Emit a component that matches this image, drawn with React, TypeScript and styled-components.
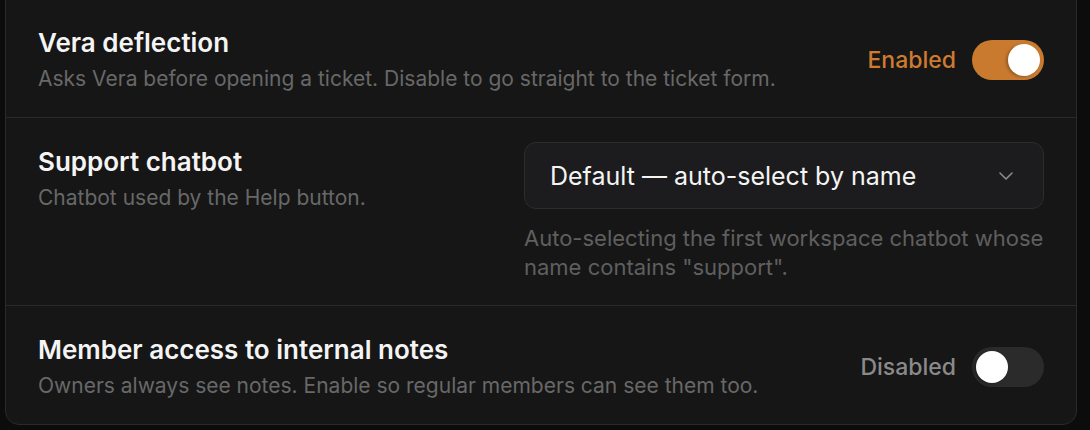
import React, { useState } from 'react';
import styled, { createGlobalStyle } from 'styled-components';

const GlobalStyle = createGlobalStyle`
  html, body {
    margin: 0;
    padding: 0;
    background: #0c0c0c;
    font-family: Inter, "Noto Sans", sans-serif;
    -webkit-font-smoothing: antialiased;
  }
`;

const Card = styled.section`
  margin: -2px 13px 0 5px;
  background: #161616;
  border: 1px solid #2a2a2a;
  border-radius: 0 0 14px 14px;
  overflow: hidden;
`;

const Row = styled.div<{ $top?: boolean }>`
  display: flex;
  justify-content: space-between;
  align-items: ${(p) => (p.$top ? 'flex-start' : 'center')};
  gap: 40px;
  padding: 26px 32px 23px 32px;
  & + & {
    border-top: 1px solid #2a2a2a;
  }
`;

const Info = styled.div`
  display: flex;
  flex-direction: column;
  gap: 3px;
`;

const Title = styled.h3`
  margin: 0;
  font-size: 26px;
  line-height: 36px;
  font-weight: 600;
  color: #f4f4f4;
`;

const Description = styled.p`
  margin: 0;
  font-size: 21px;
  line-height: 30px;
  color: #686868;
`;

const Control = styled.div`
  display: flex;
  align-items: center;
  gap: 16px;
`;

const Status = styled.span<{ $on: boolean }>`
  font-size: 23px;
  font-weight: 500;
  color: ${(p) => (p.$on ? '#cf7b2f' : '#8a8a8a')};
`;

const Track = styled.button<{ $on: boolean }>`
  position: relative;
  width: 72px;
  height: 40px;
  border: none;
  padding: 0;
  border-radius: 20px;
  cursor: pointer;
  background: ${(p) => (p.$on ? '#c97a2f' : '#2b2b2b')};
`;

const Knob = styled.span<{ $on: boolean }>`
  position: absolute;
  top: 4px;
  left: ${(p) => (p.$on ? '36px' : '4px')};
  width: 32px;
  height: 32px;
  border-radius: 50%;
  background: #ffffff;
  box-shadow: -2px 1px 3px rgba(0, 0, 0, 0.25);
`;

const SelectColumn = styled.div`
  width: 520px;
  flex-shrink: 0;
  margin-top: -2px;
  display: flex;
  flex-direction: column;
  gap: 15px;
`;

const SelectBox = styled.button`
  display: flex;
  align-items: center;
  justify-content: space-between;
  height: 67px;
  padding: 0 30px 0 25px;
  background: #1c1c1e;
  border: 1px solid #2d2d2f;
  border-radius: 12px;
  color: #f4f4f4;
  font-family: inherit;
  font-size: 25px;
  cursor: pointer;
`;

const Hint = styled.p`
  margin: 0;
  font-size: 22px;
  line-height: 29px;
  color: #5f5f5f;
`;

const Switch = ({ on, onToggle }: { on: boolean; onToggle: () => void }) => (
  <Control>
    <Status $on={on}>{on ? 'Enabled' : 'Disabled'}</Status>
    <Track $on={on} onClick={onToggle} aria-pressed={on}>
      <Knob $on={on} />
    </Track>
  </Control>
);

const Chevron = () => (
  <svg width="14" height="8" viewBox="0 0 14 8" fill="none">
    <path d="M1 1l6 6 6-6" stroke="#8a8a8a" strokeWidth="1.6" strokeLinecap="round" strokeLinejoin="round" />
  </svg>
);

export default function App() {
  const [deflection, setDeflection] = useState(true);
  const [notes, setNotes] = useState(false);

  return (
    <>
      <GlobalStyle />
      <Card>
        <Row>
          <Info>
            <Title>Vera deflection</Title>
            <Description>Asks Vera before opening a ticket. Disable to go straight to the ticket form.</Description>
          </Info>
          <Switch on={deflection} onToggle={() => setDeflection(!deflection)} />
        </Row>
        <Row $top>
          <Info>
            <Title>Support chatbot</Title>
            <Description>Chatbot used by the Help button.</Description>
          </Info>
          <SelectColumn>
            <SelectBox>
              <span>Default — auto-select by name</span>
              <Chevron />
            </SelectBox>
            <Hint>Auto-selecting the first workspace chatbot whose name contains "support".</Hint>
          </SelectColumn>
        </Row>
        <Row>
          <Info>
            <Title>Member access to internal notes</Title>
            <Description>Owners always see notes. Enable so regular members can see them too.</Description>
          </Info>
          <Switch on={notes} onToggle={() => setNotes(!notes)} />
        </Row>
      </Card>
    </>
  );
}
